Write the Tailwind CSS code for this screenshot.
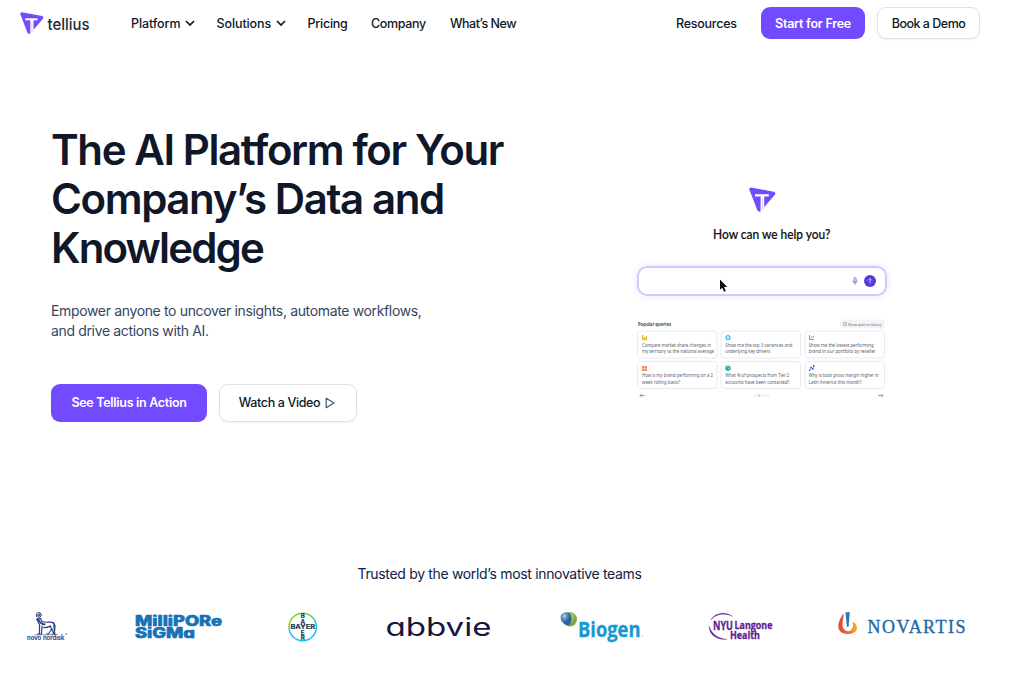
<!DOCTYPE html>
<html lang="en">
<head>
<meta charset="utf-8">
<title>Tellius</title>
<script src="https://cdn.jsdelivr.net/npm/@tailwindcss/browser@4"></script>
</head>
<body class="w-[1024px] h-[683px] overflow-hidden bg-white font-['Inter',sans-serif] text-[#0f1728]">
<svg class="hidden">
  <symbol id="mark" viewBox="0 0 24 23">
    <path d="M1.8 1.4 22 5.2a1 1 0 0 1 .5 1.7L10.2 21.2a1.3 1.3 0 0 1-2.3-.5L.9 2.6A.9.9 0 0 1 1.8 1.4Z" fill="#724bff" stroke="#724bff" stroke-width="1.2" stroke-linejoin="round"/>
    <path d="M5.300 7.800h12.300" fill="none" stroke="#fff" stroke-width="2"/>
    <path d="M10.300 8h3.200v10.600l-3.200 4z" fill="#fff"/>
    <path d="M11.900 10.500v10" stroke="#b9a6ff" stroke-width=".5"/>
  </symbol>
</svg>

<header class="flex h-[46px] items-center text-[12.5px] font-medium whitespace-nowrap">
  <a class="ml-[20px] flex w-[111px] items-center">
    <svg class="h-[24px] w-[24px]"><use href="#mark"/></svg>
    <svg class="ml-[3px] h-[24px] w-[46px]"><text x="0.5" y="19" font-family="Inter" font-size="16" font-weight="500" fill="#232838" textLength="42" lengthAdjust="spacingAndGlyphs">tellius</text></svg>
  </a>
  <nav class="flex flex-1 items-center">
    <a class="flex w-[85.5px] items-center"><span class="w-[54px] pt-[2px] tracking-[-0.1px]">Platform</span><svg class="h-[8px] w-[10px]" viewBox="0 0 10 8" fill="none" stroke="#0f1728" stroke-width="1.7"><path d="m1 2 4 4 4-4"/></svg></a>
    <a class="flex w-[91px] items-center"><span class="w-[59px] pt-[2px] tracking-[-0.1px]">Solutions</span><svg class="h-[8px] w-[10px]" viewBox="0 0 10 8" fill="none" stroke="#0f1728" stroke-width="1.7"><path d="m1 2 4 4 4-4"/></svg></a>
    <a class="w-[63.5px] pt-[2px] tracking-[-0.25px]">Pricing</a>
    <a class="w-[79px] pt-[2px] tracking-[-0.35px]">Company</a>
    <a class="pt-[2px] tracking-[-0.5px]">What’s New</a>
  </nav>
  <a class="w-[85px] pt-[2px] tracking-[-0.25px]">Resources</a>
  <a class="flex h-8 w-[104px] items-center justify-center rounded-[9px] bg-[#724bff] pt-[2px] font-semibold tracking-[-0.25px] text-white">Start for Free</a>
  <a class="mr-11 ml-3 flex h-8 w-[103px] items-center justify-center rounded-[9px] border border-[#e0e0e7] pt-[2px] tracking-[-0.5px] shadow-xs">Book a Demo</a>
</header>

<main>
  <section class="flex h-[518px]">
    <div class="w-[586px] pt-[79px] pl-[51px]">
      <h1 class="text-[42px] leading-[49px] font-[560] tracking-[-1.4px] whitespace-nowrap">The AI Platform for Your<br>Company’s Data and<br><span class="tracking-[-1.85px]">Knowledge</span></h1>
      <p class="mt-[29px] text-[14px] leading-5 tracking-[-0.35px] whitespace-nowrap text-[#344563]">Empower anyone to uncover insights, automate workflows,<br>and drive actions with AI.</p>
      <div class="mt-[43px] flex gap-3 text-[12.5px]">
        <a class="flex h-[38px] w-[156px] items-center justify-center rounded-[9px] bg-[#724bff] font-semibold tracking-[-0.3px] text-white">See Tellius in Action</a>
        <a class="flex h-[38px] w-[138px] items-center justify-center gap-[5px] rounded-[9px] border border-[#e0e0e7] pr-[2px] font-medium tracking-[-0.38px] shadow-xs"><span>Watch a Video</span><svg class="h-[12px] w-[10px]" viewBox="0 0 10 12" fill="none" stroke="#46516a" stroke-width="1.2" stroke-linejoin="round"><path d="M1.2 1.3v9.4L9 6Z"/></svg></a>
      </div>
    </div>

    <div class="flex w-[302px] flex-col items-center pt-[140px]">
      <svg class="ml-[50px] h-[27px] w-[27px]"><use href="#mark"/></svg>
      <svg class="ml-[89px] mt-[12px] h-[20px] w-[138px]"><text x="0" y="13.5" font-family="Lato" font-weight="500" font-size="12.5" fill="#111" stroke="#111" stroke-width=".2" textLength="117.5" lengthAdjust="spacingAndGlyphs">How can we help you?</text></svg>
      <div class="ml-[49px] mt-[21px] flex h-[30px] w-[250px] items-center rounded-[10px] border-2 border-[#d3c8fa] shadow-[0_0_7px_#e8e1ff]">
        <svg class="ml-[80px] mt-[9px] h-[14px] w-[9px] shrink-0" viewBox="0 0 9 14"><path d="M1 .5v10.2l2.3-2 1.8 4 1.7-.8L5 8.1h3.2Z" fill="#111"/></svg>
        <svg class="ml-[124px] h-[8px] w-[6px] shrink-0" viewBox="0 0 7 9" fill="none" stroke="#765acb" stroke-width="1"><rect x="2.3" y=".6" width="2.4" height="4.8" rx="1.2"/><path d="M1.1 4.2c0 3.3 4.8 3.3 4.8 0M3.5 6.8v1.8"/></svg>
        <svg class="ml-[6px] h-[12px] w-[12px] shrink-0" viewBox="0 0 12 12"><circle cx="6" cy="6" r="6" fill="#5739dd"/><path d="M6 8.6V3.7M4 5.5l2-2 2 2" stroke="#ddd5ff" stroke-width=".8" fill="none"/></svg>
      </div>
      <svg class="ml-[49px] mt-[22px] h-[84px] w-[254px]" viewBox="635 318 254 84" font-family="Noto Sans" font-size="4.6" fill="#596172">
        <text x="638" y="326" font-weight="700" fill="#444b59" textLength="33" lengthAdjust="spacingAndGlyphs">Popular queries</text>
        <rect x="840" y="319.5" width="44.500" height="9" rx="1.500" fill="#f3f4f7"/>
        <path d="M843.500 322.500h3v3h-3zM845 322.500v3" fill="none" stroke="#8b92a0" stroke-width=".5"/>
        <text x="848" y="325.600" font-size="4" textLength="33.500" lengthAdjust="spacingAndGlyphs">Show queries library</text>
        <g fill="#fff" stroke="#e9ebef">
          <rect x="637.500" y="331" width="79.500" height="27" rx="3"/><rect x="721" y="331" width="79.500" height="27" rx="3"/><rect x="805" y="331" width="79.500" height="27" rx="3"/>
          <rect x="637.500" y="361.500" width="79.500" height="27" rx="3"/><rect x="721" y="361.500" width="79.500" height="27" rx="3"/><rect x="805" y="361.500" width="79.500" height="27" rx="3"/>
        </g>
        <path d="M642.700 335v4.500h4.500M644.500 339v-2M646.300 339v-3" fill="none" stroke="#f5b82e" stroke-width="1.300"/>
        <circle cx="728" cy="337.500" r="1.900" fill="#e3f7ff" stroke="#43b9e8" stroke-width="1.300"/>
        <path d="M809.500 335v4.500h4.700M810.300 338l1.400-1.300 1 .7 1.500-1.400" fill="none" stroke="#5b5bd0" stroke-width=".7"/>
        <path d="M642 366h5v5h-5z" fill="#f48b55"/><path d="M642 368.500h5M644.500 366v5" stroke="#ffd9c4" stroke-width=".6"/>
        <circle cx="728" cy="368.300" r="2.700" fill="#28b08a"/><path d="M728 365.600v2.700l2 1.400" fill="none" stroke="#b9eddc" stroke-width=".6"/>
        <path d="m809.500 370.500 1.500-3 1.800 1.500 1.200-3" fill="none" stroke="#4169cf" stroke-width=".7"/><g fill="#4169cf"><circle cx="809.600" cy="370.300" r=".9"/><circle cx="811" cy="367.400" r=".9"/><circle cx="812.800" cy="369" r=".9"/><circle cx="813.800" cy="366" r=".9"/></g>
        <text x="642" y="346.500" textLength="69" lengthAdjust="spacingAndGlyphs">Compare market share changes in</text>
        <text x="642" y="353" textLength="72" lengthAdjust="spacingAndGlyphs">my territory vs the national average</text>
        <text x="725.300" y="346.500" textLength="67" lengthAdjust="spacingAndGlyphs">Show me the top 3 variances and</text>
        <text x="725.300" y="353" textLength="45" lengthAdjust="spacingAndGlyphs">underlying key drivers</text>
        <text x="808.700" y="346.500" textLength="65" lengthAdjust="spacingAndGlyphs">Show me the lowest performing</text>
        <text x="808.700" y="353" textLength="67" lengthAdjust="spacingAndGlyphs">brand in our portfolio by reseller</text>
        <text x="642" y="377.300" textLength="71" lengthAdjust="spacingAndGlyphs">How is my brand performing on a 2</text>
        <text x="642" y="383.500" textLength="38" lengthAdjust="spacingAndGlyphs">week rolling basis?</text>
        <text x="725.300" y="377.300" textLength="64" lengthAdjust="spacingAndGlyphs">What % of prospects from Tier 2</text>
        <text x="725.300" y="383.500" textLength="64" lengthAdjust="spacingAndGlyphs">accounts have been contacted?</text>
        <text x="808.700" y="377.300" textLength="70" lengthAdjust="spacingAndGlyphs">Why is total gross margin higher in</text>
        <text x="808.700" y="383.500" textLength="53" lengthAdjust="spacingAndGlyphs">Latin America this month?</text>
        <path d="M645 395.500h-5m1.800-1.800-1.800 1.800 1.800 1.800M878 395.500h5m-1.800-1.800 1.800 1.800-1.800 1.800" fill="none" stroke="#707987" stroke-width=".7"/>
        <g fill="#fff" stroke="#d5d8de" stroke-width=".6"><circle cx="755.500" cy="395.500" r="1.100"/><circle cx="759.500" cy="395.500" r="1.100" fill="#b8bdc8"/><circle cx="763.500" cy="395.500" r="1.100"/><circle cx="767.500" cy="395.500" r="1.100"/></g>
      </svg>
    </div>
  </section>

  <section>
    <h2 class="w-[999px] text-center text-[14px] leading-[20px] tracking-[-0.33px] text-[#0d2145]">Trusted by the world’s most innovative teams</h2>
    <div class="mt-[22px] flex h-[42px] items-start">
      <svg class="ml-[24px] h-[42px] w-[46px] shrink-0" viewBox="24 606 46 42" fill="none" stroke="#29417f" stroke-linecap="round">
        <path d="M36.500 616.500c-1-2 .2-4 2.200-4s3.300 2 2.300 3.700c-1 1.500-3.600 1.300-3.600-.5" stroke-width="1"/><circle cx="39" cy="614.800" r="1"/>
        <path d="M36.500 619.500c1-1 3-1.800 4-1l1.500 3c3 1.500 7 .2 10 .8 2 1 2.500 2.500 2 4.500l.8 7M37.500 620c.2 2 1 3 2 4.500v9.500h-2M42 626l-.5 8h-1M43.500 627.500c3 .6 5-.5 7-1.500l1 3.500-3 4.500h-2M52 629l2 5h-2M53.500 622.500l1.500 3-.3 5" stroke-width="1.200"/>
        <path d="M38.500 619.500c1 3 3 4.500 6 5" stroke-width="1.800"/>
        <path d="M35 634.800h20" stroke-width=".6"/>
        <text x="27" y="639.800" fill="#29417f" stroke="#29417f" stroke-width=".2" font-family="Inter" font-weight="500" font-size="7" textLength="37.500" lengthAdjust="spacingAndGlyphs">novo nordisk</text>
        <circle cx="66" cy="634" r=".7" stroke-width=".3"/>
      </svg>
      <svg class="ml-[63px] h-[42px] w-[92px] shrink-0 [font-feature-settings:'cv11']" viewBox="133 606 92 42" fill="#1472b8" stroke="#1472b8" stroke-width=".6" stroke-linejoin="round" font-family="Inter" font-weight="800">
        <text x="135" y="626" font-size="14" textLength="87" lengthAdjust="spacingAndGlyphs">MilliPORe</text>
        <text x="135" y="638.300" font-size="14" textLength="60" lengthAdjust="spacingAndGlyphs">SiGMa</text>
      </svg>
      <svg class="ml-[61px] h-[42px] w-[34px] shrink-0" viewBox="286 606 34 42">
        <defs><linearGradient id="ring" x1="0" y1="0" x2=".5" y2="1"><stop offset=".25" stop-color="#82d52f"/><stop offset=".65" stop-color="#20b9ef"/></linearGradient></defs>
        <circle cx="302.700" cy="627" r="13.700" fill="#fff" stroke="url(#ring)" stroke-width="1.500"/>
        <g fill="#173c58" stroke="#173c58" stroke-width=".2" font-family="Inter" font-weight="700">
          <text x="290.500" y="629.300" font-size="6.500" textLength="24.500" lengthAdjust="spacingAndGlyphs">BAYER</text>
          <g font-size="6.200" text-anchor="middle"><text x="302.700" y="618.300">B</text><text x="302.700" y="623.700">A</text><text x="302.700" y="634.500">E</text><text x="302.700" y="639.700">R</text></g>
        </g>
      </svg>
      <svg class="ml-[64px] h-[42px] w-[110px] shrink-0 [font-feature-settings:'cv11']" viewBox="384 606 110 42"><text x="385.500" y="636.300" font-family="Inter" font-size="25" font-weight="400" fill="#151545" textLength="106" lengthAdjust="spacingAndGlyphs">abbvie</text></svg>
      <svg class="ml-[64px] h-[42px] w-[86px] shrink-0" viewBox="558 606 86 42">
        <defs><radialGradient id="blue" cx=".35" cy=".3"><stop stop-color="#b9d5ea"/><stop offset=".5" stop-color="#5a91bd"/><stop offset="1" stop-color="#2b649d"/></radialGradient><radialGradient id="green" cx=".4" cy=".3"><stop stop-color="#d9e493"/><stop offset="1" stop-color="#78a84a"/></radialGradient></defs>
        <circle cx="569.800" cy="619.300" r="7.200" fill="url(#green)"/><path d="M561 615c2-2.500 6-3.500 8.500-2 2.500 3 2.500 7 .3 11.500-3 1.500-6.500-.5-8.500-4-.8-2-.8-4-.3-5.500Z" fill="url(#blue)"/>
        <text x="578" y="636.500" font-family="Open Sans" font-weight="700" font-size="21.500" fill="#1599d2" stroke="#1599d2" stroke-width=".3" textLength="62.500" lengthAdjust="spacingAndGlyphs">Biogen</text>
        <circle cx="642.300" cy="636" r=".5" fill="#1599d2"/>
      </svg>
      <svg class="ml-[62px] h-[42px] w-[70px] shrink-0" viewBox="706 606 70 42" fill="#612391" font-family="Open Sans" font-weight="700">
        <path d="M711 620c3-6.500 14-9.500 21.500-3.500-7-4-17-3-21.500 3.500ZM709.200 626c-.5 9 8 14.300 17.800 13.300-8.500-.5-16-5.500-17.800-13.300Z" stroke="#612391" stroke-width=".3"/>
        <g stroke="#612391" stroke-width=".3"><text x="713" y="629.500" font-size="11.500" textLength="20" lengthAdjust="spacingAndGlyphs">NYU</text><text x="734.500" y="629.300" font-size="10.500" textLength="38" lengthAdjust="spacingAndGlyphs">Langone</text><text x="730" y="639.300" font-size="10.500" textLength="30" lengthAdjust="spacingAndGlyphs">Health</text></g>
      </svg>
      <svg class="ml-[60px] h-[42px] w-[134px] shrink-0" viewBox="836 606 134 42">
        <defs><linearGradient id="flame"><stop stop-color="#df4937"/><stop offset=".55" stop-color="#ee6c2b"/><stop offset="1" stop-color="#f6b536"/></linearGradient></defs>
        <path d="M843.500 613c-1.500 3-5.200 8-5.200 13.500 0 4.500 4 7.500 9 7.500 5.500 0 9.500-2 9.700-6 0-3-1.500-5.200-4.700-6.200 1.500 3 1 7.200-2.200 9-2.500 1.300-5.500 0-7-3-1.500-4 .8-9 .4-14.800Z" fill="url(#flame)"/>
        <path d="m845.500 612.300h4.300l-1.300 14.500h-1.600Z" fill="#2878b9"/>
        <text x="867.500" y="633" font-family="Liberation Serif" font-size="18" fill="#2467a3" stroke="#2467a3" stroke-width=".35" textLength="98" lengthAdjust="spacing">NOVARTIS</text>
      </svg>
    </div>
  </section>
</main>
</body>
</html>
